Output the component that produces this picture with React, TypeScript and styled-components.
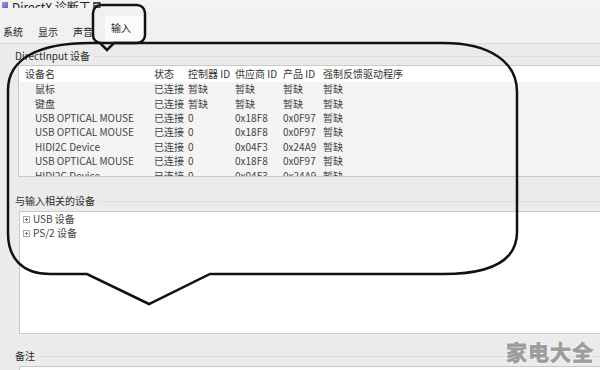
import * as React from 'react'
import styled, { createGlobalStyle } from 'styled-components'

const GlobalStyle = createGlobalStyle`
    html, body {
        margin: 0;
        padding: 0;
        background: #ececec;
    }
    body {
        font-family: "Noto Sans CJK SC", "Noto Sans", sans-serif;
        color: #333;
    }
`

const Window = styled.div`
    position: relative;
    width: 600px;
    height: 370px;
    overflow: hidden;
    background: #f1f1f1;
`

const TitleBar = styled.div`
    height: 8px;
    overflow: hidden;
    display: flex;
    align-items: flex-end;
    gap: 4px;
    padding-left: 2px;
    background: #f3f3f3;
`

const AppIcon = styled.div`
    width: 6px;
    height: 6px;
    background: linear-gradient(135deg, #b98bd6, #6a5cc4);
`

const TitleText = styled.span`
    font-size: 12px;
    line-height: 16px;
    margin-bottom: -7px;
    color: #222;
`

const TabBar = styled.div`
    display: flex;
    align-items: flex-end;
    height: 35px;
    background: #f1f1f1;
`

const Tab = styled.div<{ $active?: boolean }>`
    height: ${(p) => (p.$active ? 23 : 19)}px;
    padding: ${(p) => (p.$active ? '0 15px 4px 6px' : '0 12px 2px 3px')};
    display: flex;
    align-items: center;
    font-size: 10px;
    color: #222;
    background: ${(p) => (p.$active ? '#fbfbfb' : 'transparent')};
`

const Panel = styled.div`
    background: #ebebeb;
    border-top: 1px solid #dcdcdc;
    padding: 5px 0 0 15px;
    height: 400px;
`

const GroupLabel = styled.div<{ $top: number }>`
    display: flex;
    align-items: center;
    gap: 4px;
    margin-top: ${(p) => p.$top}px;
    height: 12px;
    font-size: 10px;
    line-height: 12px;
    color: #2c2c2c;

    &::after {
        content: '';
        flex: 1;
        border-top: 1px solid #dedede;
    }
`

const Table = styled.div`
    margin: 3px 0 0 3px;
    border: 1px solid #c9c9c9;
    border-right: none;
    background: #f4f4f4;
`

const cols = '129px 34px 47px 48px 40px 1fr'

const HeaderRow = styled.div`
    display: grid;
    grid-template-columns: ${cols};
    height: 16px;
    align-items: center;
    background: #fff;
    font-size: 10px;
    color: #333;
`

const Body = styled.div`
    height: 94px;
    overflow: hidden;
`

const Row = styled.div`
    display: grid;
    grid-template-columns: ${cols};
    height: 14.4px;
    align-items: center;
    font-size: 10px;
    color: #444;
`

const Cell = styled.div<{ $indent?: boolean }>`
    padding-left: ${(p) => (p.$indent ? 16 : 6)}px;
    white-space: nowrap;
    line-height: 14px;
`

const Box = styled.div<{ $height: number }>`
    margin: 4px 0 0 4px;
    height: ${(p) => p.$height}px;
    border: 1px solid #c9c9c9;
    border-right: none;
    background: #fff;
`

const TreeItem = styled.div`
    display: flex;
    align-items: center;
    gap: 3px;
    height: 14px;
    padding-left: 3px;
    font-size: 10px;
    line-height: 14px;
    color: #444;
`

const Watermark = styled.div`
    position: absolute;
    right: 6px;
    bottom: 7px;
    font-size: 21px;
    line-height: 24px;
    font-weight: 700;
    letter-spacing: 1px;
    color: #9c9c9c;
    -webkit-text-stroke: 0.8px #9c9c9c;
    text-shadow: 0 0 2px #fff, 0 0 2px #fff, 0 0 3px #fff;
`

const Overlay = styled.svg`
    position: absolute;
    left: 0;
    top: 0;
    width: 600px;
    height: 370px;
    pointer-events: none;
`

const ExpandIcon = () => (
    <svg width="7" height="7" viewBox="0 0 7 7">
        <rect x="0.5" y="0.5" width="6" height="6" fill="#fff" stroke="#a8a8a8" />
        <path d="M2 3.5h3M3.5 2v3" stroke="#777" />
    </svg>
)

const headers = ['设备名', '状态', '控制器 ID', '供应商 ID', '产品 ID', '强制反馈驱动程序']

const devices = [
    ['鼠标', '已连接', '暂缺', '暂缺', '暂缺', '暂缺'],
    ['键盘', '已连接', '暂缺', '暂缺', '暂缺', '暂缺'],
    ['USB OPTICAL MOUSE', '已连接', '0', '0x18F8', '0x0F97', '暂缺'],
    ['USB OPTICAL MOUSE', '已连接', '0', '0x18F8', '0x0F97', '暂缺'],
    ['HIDI2C Device', '已连接', '0', '0x04F3', '0x24A9', '暂缺'],
    ['USB OPTICAL MOUSE', '已连接', '0', '0x18F8', '0x0F97', '暂缺'],
    ['HIDI2C Device', '已连接', '0', '0x04F3', '0x24A9', '暂缺'],
]

const tabs = ['系统', '显示', '声音', '输入']

const App = () => (
    <Window>
        <GlobalStyle />
        <TitleBar>
            <AppIcon />
            <TitleText>DirectX 诊断工具</TitleText>
        </TitleBar>
        <TabBar>
            {tabs.map((t) => (
                <Tab key={t} $active={t === '输入'}>
                    {t}
                </Tab>
            ))}
        </TabBar>
        <Panel>
            <GroupLabel $top={1}>DirectInput 设备</GroupLabel>
            <Table>
                <HeaderRow>
                    {headers.map((h) => (
                        <Cell key={h}>{h}</Cell>
                    ))}
                </HeaderRow>
                <Body>
                    {devices.map((d, i) => (
                        <Row key={i}>
                            {d.map((v, j) => (
                                <Cell key={j} $indent={j === 0}>
                                    {v}
                                </Cell>
                            ))}
                        </Row>
                    ))}
                </Body>
            </Table>
            <GroupLabel $top={18}>与输入相关的设备</GroupLabel>
            <Box $height={121}>
                <TreeItem>
                    <ExpandIcon />
                    USB 设备
                </TreeItem>
                <TreeItem>
                    <ExpandIcon />
                    PS/2 设备
                </TreeItem>
            </Box>
            <GroupLabel $top={16}>备注</GroupLabel>
            <Box $height={40} />
        </Panel>
        <Overlay viewBox="0 0 600 370">
            <rect x="93" y="5" width="52" height="38" rx="8" fill="none" stroke="#111" strokeWidth="2.5" />
            <path
                d="M90 43 L100 43 L107 50 L114 43 L443 43 C490 43 517 62 517 92 L517 232 C517 260 492 274 443 274 L210 274 L149 304 L87 274 L50 274 C22 274 8 258 8 233 L8 90 C8 58 40 43 90 43 Z"
                fill="none"
                stroke="#111"
                strokeWidth="2.5"
                strokeLinejoin="miter"
            />
        </Overlay>
        <Watermark>家电大全</Watermark>
    </Window>
)

export default App
